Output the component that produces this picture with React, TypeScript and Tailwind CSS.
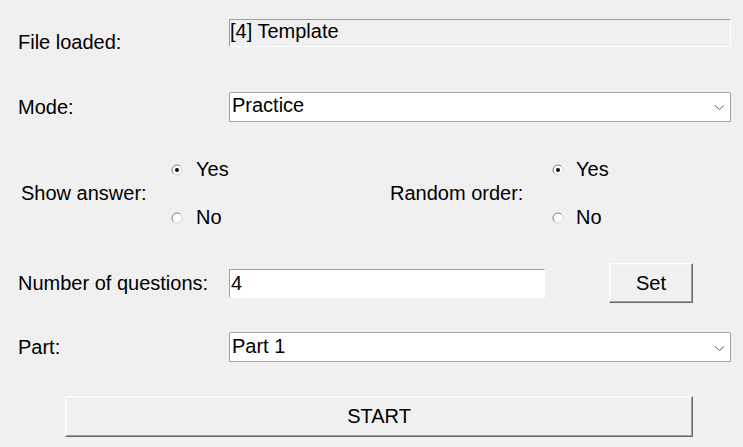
import React from "react";

function Radio({ checked, label, gap }: { checked: boolean; label: string; gap: string }) {
  return (
    <div className={`flex items-center ${gap}`}>
      <svg width="12" height="12" viewBox="0 0 12 12" className="shrink-0">
        <circle cx="6" cy="6" r="5" fill="#ffffff" />
        <path d="M2.46 9.54A5 5 0 0 1 9.54 2.46" fill="none" stroke="#7a7a7a" strokeWidth="1" />
        <path d="M9.54 2.46A5 5 0 0 1 2.46 9.54" fill="none" stroke="#d4d4d4" strokeWidth="1" />
        {checked && <circle cx="6" cy="6" r="2" fill="#000000" />}
      </svg>
      <span>{label}</span>
    </div>
  );
}

function Combo({ value, className }: { value: string; className: string }) {
  return (
    <div
      className={`w-[502px] h-[30px] bg-white border border-[#a5a5a5] rounded-[1px] flex items-start justify-between pl-[2px] pr-[5px] ${className}`}
    >
      <span>{value}</span>
      <svg width="11" height="7" viewBox="0 0 11 7" className="self-center">
        <path d="M1 1.5 5.5 5.5 10 1.5" fill="none" stroke="#606060" strokeWidth="1" />
      </svg>
    </div>
  );
}

const raised =
  "bg-[#f0f0f0] border border-t-white border-l-white border-r-[#696969] border-b-[#696969] shadow-[inset_-1px_-1px_0_#a0a0a0,inset_1px_1px_0_#f6f6f6] flex items-center justify-center";

export default function App() {
  return (
    <div className="w-[743px] h-[447px] bg-[#f0f0f0] text-black text-[20px] leading-[23px] font-['Liberation_Sans',Arial,sans-serif] pl-[18px] pt-[19px]">
      {/* file loaded */}
      <div className="flex items-start">
        <div className="w-[211px] pt-[12px]">File loaded:</div>
        <div className="w-[502px] h-[28px] border border-t-[#a0a0a0] border-l-[#a0a0a0] border-r-white border-b-white">
          [4] Template
        </div>
      </div>

      {/* mode */}
      <div className="flex items-center mt-[38px]">
        <div className="w-[211px]">Mode:</div>
        <Combo value="Practice" className="pt-[1px]" />
      </div>

      {/* options */}
      <div className="flex items-center mt-[36px]">
        <div className="w-[153px] pl-[3px]">Show answer:</div>
        <div className="w-[219px] flex flex-col gap-[25px]">
          <Radio checked label="Yes" gap="gap-[13px]" />
          <Radio checked={false} label="No" gap="gap-[13px]" />
        </div>
        <div className="w-[162px]">Random order:</div>
        <div className="flex flex-col gap-[25px]">
          <Radio checked label="Yes" gap="gap-[12px]" />
          <Radio checked={false} label="No" gap="gap-[12px]" />
        </div>
      </div>

      {/* number of questions */}
      <div className="flex items-center mt-[34px] h-[40px]">
        <div className="w-[211px]">Number of questions:</div>
        <div className="w-[316px] h-[29px] bg-white border border-t-[#a0a0a0] border-l-[#a0a0a0] border-r-white border-b-white flex items-center pl-[1px]">
          4
        </div>
        <div className={`ml-[64px] w-[84px] h-[40px] ${raised}`}>Set</div>
      </div>

      {/* part */}
      <div className="flex items-center mt-[29px]">
        <div className="w-[211px]">Part:</div>
        <Combo value="Part 1" className="pt-[2px]" />
      </div>

      {/* start */}
      <div className={`mt-[34px] ml-[47px] w-[628px] h-[41px] ${raised}`}>START</div>
    </div>
  );
}
